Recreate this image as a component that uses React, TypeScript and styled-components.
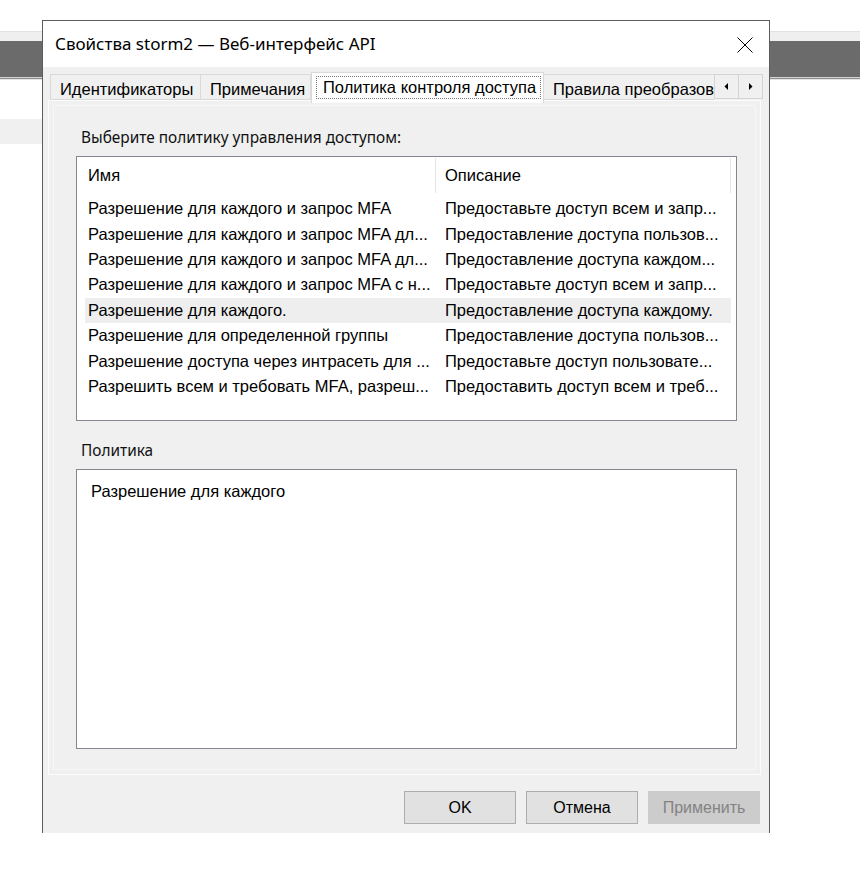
import React from 'react';
import styled, { createGlobalStyle } from 'styled-components';

// what the list view shows, already cut by its column widths
const ROWS = [
  { name: 'Разрешение для каждого и запрос MFA', desc: 'Предоставьте доступ всем и запр...' },
  { name: 'Разрешение для каждого и запрос MFA дл...', desc: 'Предоставление доступа пользов...' },
  { name: 'Разрешение для каждого и запрос MFA дл...', desc: 'Предоставление доступа каждом...' },
  { name: 'Разрешение для каждого и запрос MFA с н...', desc: 'Предоставьте доступ всем и запр...' },
  { name: 'Разрешение для каждого.', desc: 'Предоставление доступа каждому.' },
  { name: 'Разрешение для определенной группы', desc: 'Предоставление доступа пользов...' },
  { name: 'Разрешение доступа через интрасеть для ...', desc: 'Предоставьте доступ пользовате...' },
  { name: 'Разрешить всем и требовать MFA, разреш...', desc: 'Предоставить доступ всем и треб...' },
];

const TABS = [
  { title: 'Идентификаторы', width: 151 },
  { title: 'Примечания', width: 110 },
  { title: 'Политика контроля доступа', width: 233 },
  { title: 'Правила преобразования выдачи', width: 260 },
];
const ACTIVE_TAB = 2;
const SELECTED_ROW = 4;

const GlobalStyle = createGlobalStyle`
  html, body {
    margin: 0;
    padding: 0;
    background: #ffffff;
  }
  body {
    font-family: "Liberation Sans", Arial, sans-serif;
    color: #000;
  }
`;

export default function App() {
  return (
    <>
      <GlobalStyle />
      <Desktop>
        <Stripe>
          <StripeLight />
          <StripeDark />
          <StripeLine $color="#d4d4d4" />
          <StripeLine $color="#8e8e8e" />
          <StripeLine $color="#e4e4e4" />
        </Stripe>
        <SideBand />

        <Window>
          <TitleBar>
            <Title>Свойства storm2 — Веб-интерфейс API</Title>
            <CloseButton>
              <svg width="16" height="16" viewBox="0 0 16 16">
                <path d="M0.5 0.5 L15.5 15.5 M15.5 0.5 L0.5 15.5" stroke="#000" strokeWidth="1" fill="none" />
              </svg>
            </CloseButton>
          </TitleBar>

          <Body>
            <TabStrip>
              <TabList>
                {TABS.map((t, i) =>
                  i === ACTIVE_TAB ? (
                    <ActiveTab key={t.title} style={{ width: t.width }}>
                      <FocusLabel>{t.title}</FocusLabel>
                    </ActiveTab>
                  ) : (
                    <Tab key={t.title} style={{ width: t.width }}>
                      {t.title}
                    </Tab>
                  )
                )}
              </TabList>
              <ScrollButtons>
                <ScrollButton>
                  <svg width="5" height="7" viewBox="0 0 5 7">
                    <polygon points="4,0 4,7 0.5,3.5" fill="#000" />
                  </svg>
                </ScrollButton>
                <ScrollButton>
                  <svg width="5" height="7" viewBox="0 0 5 7">
                    <polygon points="1,0 1,7 4.5,3.5" fill="#000" />
                  </svg>
                </ScrollButton>
              </ScrollButtons>
            </TabStrip>

            <Panel>
              <FieldLabel>Выберите политику управления доступом:</FieldLabel>
              <ListBox>
                <ListHeader>
                  <HeaderCell $width={359}>Имя</HeaderCell>
                  <HeaderCell $width={295} $pad={9}>Описание</HeaderCell>
                </ListHeader>
                {ROWS.map((r, i) => (
                  <Row key={i} $selected={i === SELECTED_ROW}>
                    <Cell $width={347}>{r.name}</Cell>
                    <Cell $width={289}>{r.desc}</Cell>
                  </Row>
                ))}
              </ListBox>

              <FieldLabel $top={20}>Политика</FieldLabel>
              <PolicyBox>Разрешение для каждого</PolicyBox>
            </Panel>

            <ButtonBar>
              <DialogButton>OK</DialogButton>
              <DialogButton>Отмена</DialogButton>
              <DialogButton disabled>Применить</DialogButton>
            </ButtonBar>
          </Body>
        </Window>
      </Desktop>
    </>
  );
}

const Desktop = styled.div`
  position: relative;
  width: 860px;
  height: 873px;
  overflow: hidden;
  padding-top: 31px;
  box-sizing: border-box;
`;

const Stripe = styled.div`
  display: flex;
  flex-direction: column;
`;

const StripeLight = styled.div`
  height: 10px;
  background: #efefef;
  border-top: 1px solid #e2e2e2;
  box-sizing: border-box;
`;

const StripeDark = styled.div`
  height: 36px;
  background: #6b6b6b;
`;

const StripeLine = styled.div<{ $color: string }>`
  height: 1px;
  background: ${(p) => p.$color};
`;

const SideBand = styled.div`
  margin-top: 39px;
  width: 60px;
  height: 25px;
  background: #f0f0f0;
`;

const Window = styled.div`
  position: absolute;
  left: 42px;
  top: 20px;
  width: 728px;
  height: 813px;
  display: flex;
  flex-direction: column;
  border: 1px solid #5c5c5c;
  border-bottom: none;
  box-sizing: border-box;
  background: #f0f0f0;
`;

const TitleBar = styled.div`
  height: 46px;
  flex: none;
  display: flex;
  align-items: center;
  justify-content: space-between;
  background: #ffffff;
  padding: 0 16px 0 12px;
`;

const Title = styled.div`
  font-family: "Noto Sans", "Open Sans", sans-serif;
  font-size: 17px;
  color: #000;
  margin-top: -1px;
`;

const CloseButton = styled.div`
  display: flex;
  align-items: center;
  margin-top: 2px;
`;

const Body = styled.div`
  flex: 1;
  display: flex;
  flex-direction: column;
  padding: 5px 0 0 0;
`;

const TabStrip = styled.div`
  display: flex;
  align-items: flex-start;
  height: 28px;
  padding-left: 7px;
  position: relative;
  z-index: 1;
`;

const TabList = styled.div`
  display: flex;
  align-items: flex-start;
  width: 664px;
  overflow: hidden;
  height: 31px;
`;

const Tab = styled.div`
  flex: none;
  box-sizing: border-box;
  height: 26px;
  margin-top: 2px;
  padding: 4px 0 0 9px;
  line-height: 20px;
  background: #f0f0f0;
  border: 1px solid #d9d9d9;
  font-size: 16.5px;
  white-space: nowrap;
  overflow: hidden;
  & + & {
    border-left: none;
  }
`;

const ActiveTab = styled.div`
  flex: none;
  box-sizing: border-box;
  height: 31px;
  padding: 3px 2px 0 4px;
  background: #ffffff;
  border: 1px solid #d9d9d9;
  border-bottom: none;
  font-size: 16.5px;
  white-space: nowrap;
  & + ${Tab} {
    border-left: none;
  }
`;

const FocusLabel = styled.span`
  display: block;
  box-sizing: border-box;
  height: 23px;
  padding-left: 6px;
  line-height: 20px;
  border: 1px dotted #777;
`;

const ScrollButtons = styled.div`
  display: flex;
  margin-top: 2px;
`;

const ScrollButton = styled.div`
  width: 25px;
  height: 25px;
  box-sizing: border-box;
  display: flex;
  align-items: center;
  justify-content: center;
  background: #f0f0f0;
  border: 1px solid #d4d4d4;
  & + & {
    border-left: none;
    width: 24px;
  }
`;

const Panel = styled.div`
  margin: 0 8px 0 5px;
  height: 675px;
  box-sizing: border-box;
  border: 1px solid #fcfcfc;
  box-shadow: inset 0 0 0 4px #f0f0f0, inset 0 0 0 5px #f7f7f7;
  padding: 27px 23px 0 27px;
  display: flex;
  flex-direction: column;
`;

const FieldLabel = styled.div<{ $top?: number }>`
  font-family: "Noto Sans", "Open Sans", sans-serif;
  font-size: 15.4px;
  line-height: 20px;
  height: 20px;
  padding-left: 5px;
  margin-top: ${(p) => p.$top ?? 0}px;
  margin-bottom: 8px;
  color: #111;
`;

const ListBox = styled.div`
  height: 265px;
  box-sizing: border-box;
  border: 1px solid #828790;
  background: #ffffff;
  display: flex;
  flex-direction: column;
`;

const ListHeader = styled.div`
  display: flex;
  height: 38px;
  flex: none;
  align-items: stretch;
  margin-bottom: 1px;
`;

const HeaderCell = styled.div<{ $width: number; $pad?: number }>`
  width: ${(p) => p.$width}px;
  box-sizing: border-box;
  padding-left: ${(p) => p.$pad ?? 11}px;
  display: flex;
  align-items: center;
  font-size: 16.5px;
  border-right: 1px solid #e5e5e5;
  margin: 1px 0 2px;
`;

const Row = styled.div<{ $selected: boolean }>`
  display: flex;
  height: 25.4px;
  align-items: center;
  margin-left: 8px;
  width: 646px;
  background: ${(p) => (p.$selected ? '#eeeeee' : 'transparent')};
  font-size: 16.5px;
`;

const Cell = styled.div<{ $width: number }>`
  width: ${(p) => p.$width}px;
  box-sizing: border-box;
  padding-left: 3px;
  white-space: nowrap;
  overflow: hidden;
  & + & {
    margin-left: 10px;
  }
`;

const PolicyBox = styled.div`
  height: 280px;
  box-sizing: border-box;
  border: 1px solid #828790;
  background: #ffffff;
  padding: 11px 14px;
  font-size: 16.5px;
  line-height: 20px;
`;

const ButtonBar = styled.div`
  display: flex;
  justify-content: flex-end;
  gap: 10px;
  padding: 16px 9px 0 0;
`;

const DialogButton = styled.button`
  width: 112px;
  height: 33px;
  box-sizing: border-box;
  border: 1px solid ${(p) => (p.disabled ? '#cccccc' : '#adadad')};
  background: ${(p) => (p.disabled ? '#cccccc' : '#e1e1e1')};
  color: ${(p) => (p.disabled ? '#838383' : '#000')};
  font-family: "Liberation Sans", Arial, sans-serif;
  font-size: 16px;
  padding: 0;
`;
